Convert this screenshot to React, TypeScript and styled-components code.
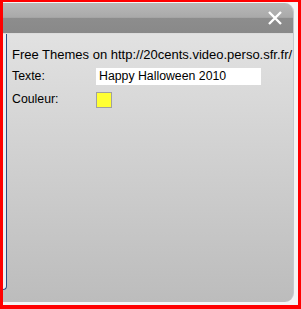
import React from "react";
import styled, { createGlobalStyle } from "styled-components";

const Global = createGlobalStyle`
  html, body { margin: 0; padding: 0; background: #ffffff; }
  body { font-family: Arial, "Liberation Sans", sans-serif; }
`;

const Frame = styled.div`
  box-sizing: border-box;
  width: 301px;
  height: 309px;
  border-style: solid;
  border-color: #ff0000;
  border-width: 2px 3px 4px 3px;
  background: #f4f4f4;
  padding: 1px 4px 3px 0;
  display: flex;
`;

const Panel = styled.div`
  flex: 1;
  display: flex;
  flex-direction: column;
  border-radius: 0 9px 9px 0;
  overflow: hidden;
  border-right: 1px solid #c4c8cc;
  background: linear-gradient(#e6e6e6, #bcbcbc);
`;

const Header = styled.div`
  height: 30px;
  flex: none;
  display: flex;
  justify-content: flex-end;
  align-items: center;
  padding-right: 10px;
  border-bottom: 1px solid #dcdcdc;
  background: linear-gradient(
    #b9b9b9 0%,
    #a9a9a9 48%,
    #8d8d8d 50%,
    #898989 100%
  );
`;

const Close = styled.button`
  all: unset;
  width: 16px;
  height: 16px;
  display: flex;
  cursor: pointer;
`;

const Body = styled.div`
  flex: 1;
  display: flex;
`;

const SideEdge = styled.div`
  flex: none;
  width: 3px;
  height: 255px;
  background: #eef0f2;
  border-right: 1px solid #2c4e86;
  border-bottom-right-radius: 7px;
  border-bottom: 1px solid #2c4e86;
  align-self: flex-start;
`;

const Content = styled.div`
  flex: 1;
  padding: 13px 0 0 5px;
  display: flex;
  flex-direction: column;
  gap: 5px;
  font-size: 12.3px;
  color: #000;
`;

const Title = styled.div`
  font-size: 13px;
  line-height: 15px;
  white-space: nowrap;
`;

const Row = styled.div`
  display: grid;
  grid-template-columns: 84px auto;
  align-items: center;
  height: 18px;
`;

const Label = styled.span`
  line-height: 14px;
`;

const TextField = styled.div`
  width: 162px;
  height: 17px;
  background: #ffffff;
  line-height: 17px;
  padding-left: 3px;
`;

const Swatch = styled.div<{ $color: string }>`
  box-sizing: border-box;
  width: 16px;
  height: 16px;
  background: ${(p) => p.$color};
  border: 1px solid #a0a0a0;
  margin-top: 2px;
`;

export default function App() {
  return (
    <>
      <Global />
      <Frame>
        <Panel>
          <Header>
            <Close aria-label="close">
              <svg width="16" height="16" viewBox="0 0 16 16">
                <path d="M2 2 L14 14 M14 2 L2 14" stroke="#ffffff" strokeWidth="2.4" strokeLinecap="butt" />
              </svg>
            </Close>
          </Header>
          <Body>
            <SideEdge />
            <Content>
              <Title>Free Themes on http://20cents.video.perso.sfr.fr/</Title>
              <Row>
                <Label>Texte:</Label>
                <TextField>Happy Halloween 2010</TextField>
              </Row>
              <Row>
                <Label>Couleur:</Label>
                <Swatch $color="#ffff33" />
              </Row>
            </Content>
          </Body>
        </Panel>
      </Frame>
    </>
  );
}
